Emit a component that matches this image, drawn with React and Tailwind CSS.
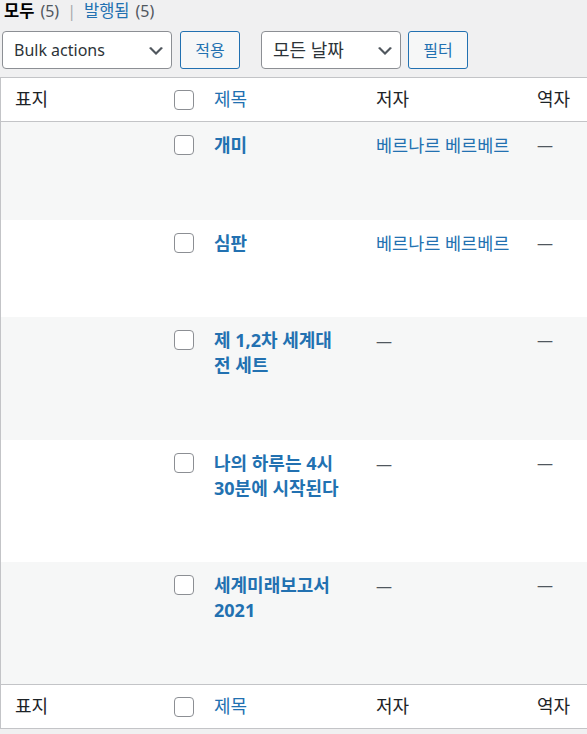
const rows = [
  { title: ["개미"], author: "베르나르 베르베르", h: "h-[98px]", bg: "bg-[#f6f7f7]" },
  { title: ["심판"], author: "베르나르 베르베르", h: "h-[97px]", bg: "bg-white" },
  { title: ["제 1,2차 세계대", "전 세트"], author: null, h: "h-[123px]", bg: "bg-[#f6f7f7]" },
  { title: ["나의 하루는 4시", "30분에 시작된다"], author: null, h: "h-[122px]", bg: "bg-white" },
  { title: ["세계미래보고서", "2021"], author: null, h: "h-[122px]", bg: "bg-[#f6f7f7]" },
];

const Chevron = () => (
  <svg width="20" height="20" viewBox="0 0 20 20" className="absolute right-[5px] top-[9px]">
    <path d="M5 6l5 5 5-5 2 1-7 7-7-7 2-1z" fill="#50575e" />
  </svg>
);

const Select = ({ label, className }) => (
  <div
    className={`relative h-[38px] rounded-[4px] border border-[#8c8f94] bg-white pl-[11px] leading-[36px] text-[#2c3338] ${className}`}
  >
    {label}
    <Chevron />
  </div>
);

const Button = ({ label }) => (
  <div className="flex h-[38px] w-[60px] items-center justify-center rounded-[3px] border border-[#2271b1] bg-[#f6f7f7] text-[16px] text-[#2271b1]">
    {label}
  </div>
);

const Checkbox = () => (
  <div className="h-[20px] w-[20px] rounded-[4px] border border-[#8c8f94] bg-white" />
);

const HeadRow = ({ className }) => (
  <div className={`flex h-[44px] items-center text-[18px] text-[#1d2327] ${className}`}>
    <div className="w-[173px] pl-[14px]">표지</div>
    <div className="w-[40px]">
      <Checkbox />
    </div>
    <div className="w-[162px] text-[#2271b1]">제목</div>
    <div className="w-[161px]">저자</div>
    <div className="flex-1">역자</div>
  </div>
);

const Dash = () => <span className="text-[16px] text-[#50575e]">—</span>;

export default function App() {
  return (
    <div className="h-[734px] w-[587px] overflow-hidden bg-[#f0f0f1] font-['Noto_Sans','Noto_Sans_CJK_KR',sans-serif]">
      <div className="flex h-[22px] items-center pl-[4px] text-[16.5px] leading-[22px]">
        <span className="font-semibold text-black">모두</span>
        <span className="ml-[6px] text-[16px] text-[#50575e]">(5)</span>
        <span className="mx-[8px] text-[16px] text-[#a7aaad]">|</span>
        <span className="text-[#2271b1]">발행됨</span>
        <span className="ml-[6px] text-[16px] text-[#50575e]">(5)</span>
      </div>

      <div className="mt-[9px] flex pl-[2px]">
        <Select label="Bulk actions" className="w-[170px] text-[16px]" />
        <div className="ml-[8px]">
          <Button label="적용" />
        </div>
        <div className="ml-[21px]">
          <Select label="모든 날짜" className="w-[140px] text-[18px]" />
        </div>
        <div className="ml-[7px]">
          <Button label="필터" />
        </div>
      </div>

      <div className="mt-[8px] w-[620px] border border-[#c3c4c7] bg-white">
        <HeadRow className="border-b border-[#c3c4c7]" />
        {rows.map((r, i) => (
          <div key={i} className={`flex items-start ${r.h} ${r.bg} leading-[24.5px]`}>
            <div className="w-[173px]" />
            <div className="w-[40px] pt-[13px]">
              <Checkbox />
            </div>
            <div className="w-[162px] pt-[11px] text-[18px] font-bold text-[#2271b1]">
              {r.title.map((line, j) => (
                <div key={j} className="whitespace-nowrap">
                  {line}
                </div>
              ))}
            </div>
            <div className="w-[161px] pt-[11px] text-[17.5px] text-[#2271b1]">
              {r.author ? r.author : <Dash />}
            </div>
            <div className="flex-1 pt-[11px]">
              <Dash />
            </div>
          </div>
        ))}
        <HeadRow className="border-t border-[#c3c4c7]" />
      </div>
    </div>
  );
}
